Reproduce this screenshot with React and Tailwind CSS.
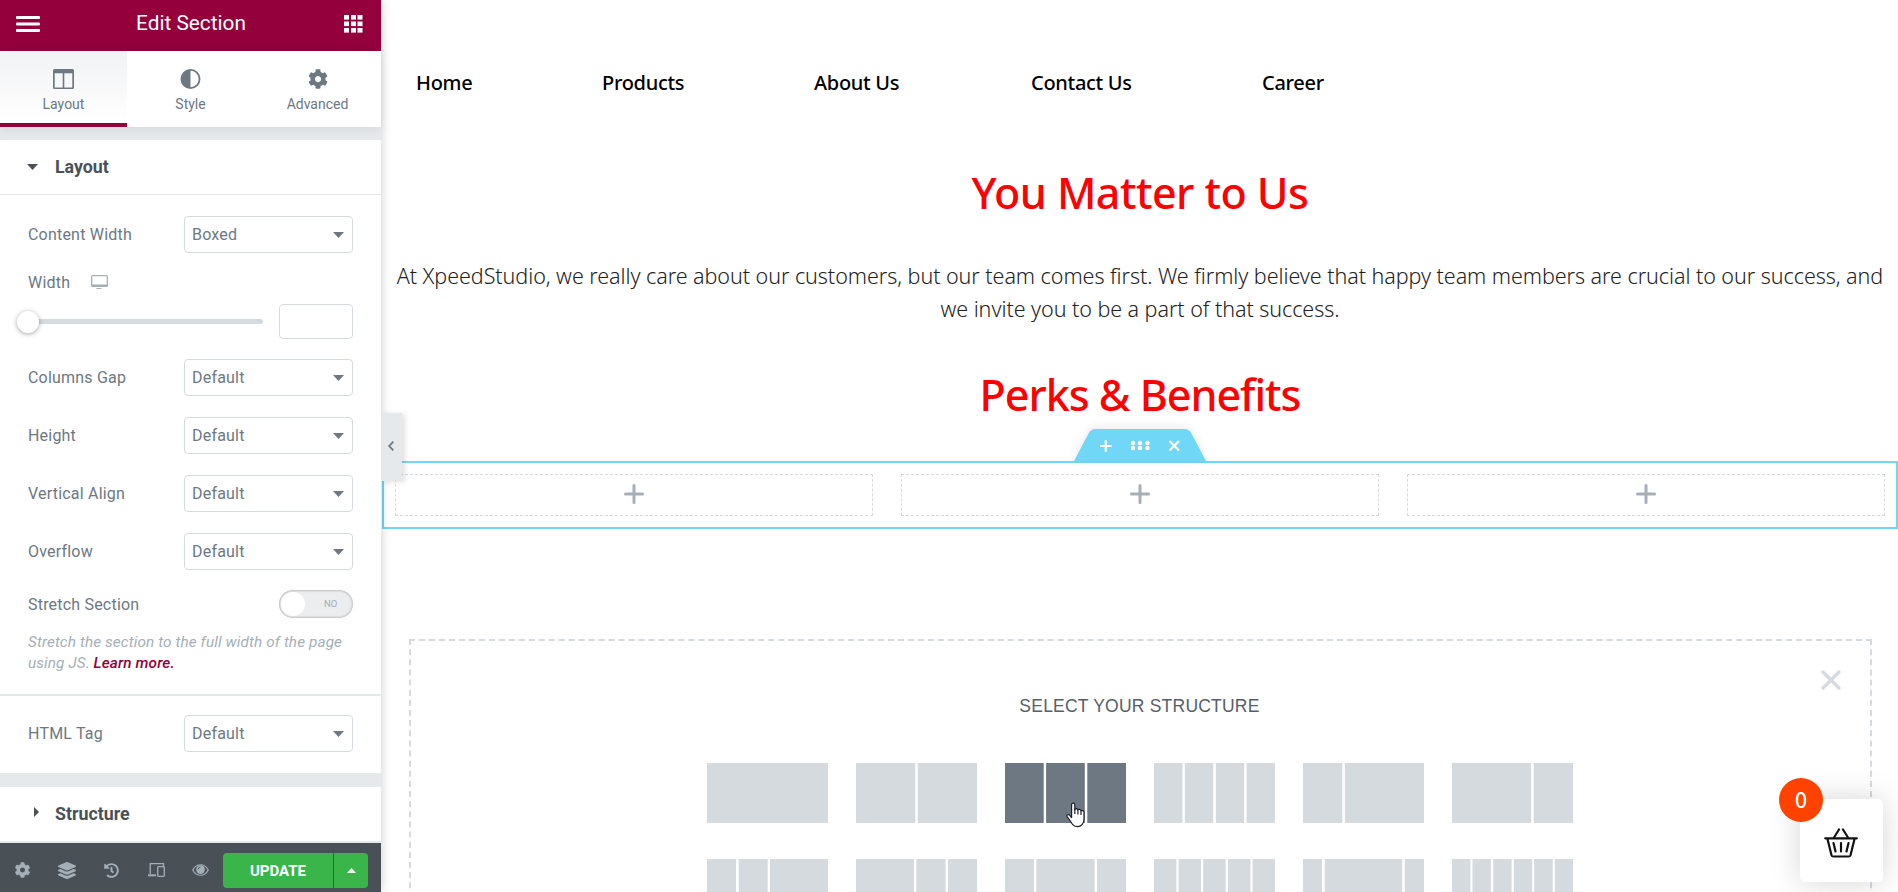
import { FaCog, FaHistory } from 'react-icons/fa'

const NAV_ITEMS = [
  { label: 'Home', width: 'w-[56px]' },
  { label: 'Products', width: 'w-[82px]' },
  { label: 'About Us', width: 'w-[87px]' },
  { label: 'Contact Us', width: 'w-[101px]' },
  { label: 'Career', width: 'w-[61px]' },
]

// [x, width] of every column block inside a 121px wide preset
const PRESETS = [
  [[0, 121]],
  [[0, 59.3], [61.7, 59.3]],
  [[0, 38.7], [41.1, 38.7], [82.3, 38.7]],
  [[0, 28.5], [30.8, 28.4], [61.8, 28.4], [92.6, 28.4]],
  [[0, 39.3], [41.9, 79.1]],
  [[0, 79.1], [81.7, 39.3]],
  [[0, 29], [31.7, 29], [63, 58]],
  [[0, 58], [60.3, 29.3], [92, 29]],
  [[0, 29], [31.3, 58.4], [92, 29]],
  [[0, 22.4], [24.6, 22.4], [49.2, 22.5], [74, 22.4], [98.6, 22.4]],
  [[0, 19], [21.7, 77.5], [101.7, 19.3]],
  [[0, 18.4], [20.5, 18.4], [41.2, 18.4], [61.8, 18.4], [82.2, 18.5], [102.8, 18.2]],
]

export default function App() {
  return (
    <div className="h-[892px] w-[1898px] flex overflow-hidden bg-white font-['Roboto',sans-serif]">
      <Sidebar />
      <Canvas />
    </div>
  )
}

function Sidebar() {
  return (
    <aside className="relative z-20 w-[381px] h-full flex-shrink-0 flex flex-col bg-white text-[#6d7882] shadow-[0_0_10px_rgba(0,0,0,0.2)]">
      <header className="h-[51px] flex-shrink-0 bg-[#93003c] text-white flex items-center justify-between pl-4 pr-[18px] pb-[3px]">
        <svg className="w-6 h-4" viewBox="0 0 24 16" fill="currentColor">
          <rect width="24" height="3" rx="1" />
          <rect y="6.5" width="24" height="3" rx="1" />
          <rect y="13" width="24" height="3" rx="1" />
        </svg>
        <h1 className="text-[20.8px] leading-6 pr-[2px] pb-[2px]">Edit Section</h1>
        <svg className="w-[19px] h-[18px]" viewBox="0 0 19 18" fill="currentColor">
          {[0, 6.5, 13].map((y) =>
            [0, 7, 13.5].map((x) => <rect key={`${x}-${y}`} x={x} y={y} width="5" height="4.6" />)
          )}
        </svg>
      </header>

      <div className="relative z-10 h-[76px] flex-shrink-0 grid grid-cols-3 bg-white shadow-[0_2px_10px_rgba(0,0,0,0.08)]">
        <Tab label="Layout" active>
          <svg className="w-[21px] h-5" viewBox="0 0 21 20" fill="currentColor">
            <path fillRule="evenodd" d="M1.5 0h18A1.5 1.5 0 0 1 21 1.500v17a1.500 1.500 0 0 1-1.500 1.500h-18A1.500 1.500 0 0 1 0 18.500v-17A1.500 1.500 0 0 1 1.500 0zM1.700 4.200v14.200h8V4.200zM11.300 4.200v14.200h8V4.200z" />
          </svg>
        </Tab>
        <Tab label="Style">
          <svg className="w-[21px] h-5" viewBox="0 0 21 20">
            <circle cx="10.5" cy="10" r="9.100" fill="none" stroke="currentColor" strokeWidth="1.8" />
            <path d="M10.500 1a9 9 0 0 0 0 18z" fill="currentColor" />
          </svg>
        </Tab>
        <Tab label="Advanced">
          <FaCog className="w-5 h-5" />
        </Tab>
      </div>

      <div className="h-[13px] flex-shrink-0 bg-[#e6e9ec]" />

      <div className="h-[55px] flex-shrink-0 border-b border-[#e6e9ec] flex items-center pl-[27px] text-[#495157]">
        <Caret />
        <h2 className="ml-[17px] mt-[1px] text-[17.8px] font-bold">Layout</h2>
      </div>

      <div className="flex flex-col px-7 pt-[21px] text-base tracking-[0.2px]">
        <SelectRow label="Content Width" value="Boxed" />
        <div className="mt-[17px] h-6 flex items-center">
          <span className="pt-[1px]">Width</span>
          <svg className="ml-[21px] w-[17px] h-[15px]" viewBox="0 0 17 15" fill="#a4afb7">
            <path fillRule="evenodd" d="M1.500 0h14A1.500 1.500 0 0 1 17 1.500v9a1.500 1.500 0 0 1-1.500 1.500h-14A1.500 1.500 0 0 1 0 10.500v-9A1.500 1.500 0 0 1 1.500 0zM1.300 1.300v8.200h14.400V1.300z" />
            <rect x="5.500" y="13" width="5" height="1" />
          </svg>
        </div>
        <div className="mt-[10px] flex items-center justify-between">
          <div className="-ml-[11px] flex items-center">
            <div className="z-10 w-[22px] h-[22px] rounded-full bg-white shadow-[0_1px_5px_rgba(0,0,0,0.35)]" />
            <div className="-ml-1 w-[228px] h-[5px] rounded-full bg-[#d5dadf]" />
          </div>
          <div className="w-[74px] h-[35px] rounded-[4px] border border-[#d5dadf]" />
        </div>
        <div className="mt-5 flex flex-col gap-[21px]">
          <SelectRow label="Columns Gap" value="Default" />
          <SelectRow label="Height" value="Default" />
          <SelectRow label="Vertical Align" value="Default" />
          <SelectRow label="Overflow" value="Default" />
        </div>
        <div className="mt-5 h-7 flex items-center justify-between">
          <span className="pt-[1px]">Stretch Section</span>
          <div className="w-[74px] h-7 rounded-full bg-[#ebedef] p-[2px] flex items-center shadow-[inset_0_0_2px_1px_rgba(0,0,0,0.2)]">
            <div className="w-6 h-6 rounded-full bg-white" />
            <span className="ml-[19px] text-[9.5px] tracking-normal text-[#a4afb7]">NO</span>
          </div>
        </div>
        <p className="mt-[14px] h-[62px] text-[15.3px] leading-[21px] tracking-[0.12px] italic text-[#a4afb7] whitespace-nowrap">
          Stretch the section to the full width of the page<br />
          using JS. <a className="font-medium text-[#93003c]">Learn more.</a>
        </p>
      </div>

      <div className="border-t-2 border-[#e6e9ec] h-[79px] flex-shrink-0 px-7 pt-[19px] text-base tracking-[0.2px]">
        <SelectRow label="HTML Tag" value="Default" />
      </div>

      <div className="h-[14px] flex-shrink-0 bg-[#e6e9ec]" />

      <div className="h-14 flex-shrink-0 border-b-2 border-[#e6e9ec] flex items-center pl-[34px] text-[#495157]">
        <svg className="w-[5px] h-[10px] mb-1" viewBox="0 0 5 10" fill="currentColor">
          <path d="M0 0l5 5-5 5z" />
        </svg>
        <h2 className="ml-4 text-[17.8px] font-bold">Structure</h2>
      </div>

      <Footer />

      {/* collapse handle sits over the canvas edge */}
      <button className="absolute left-full top-[413px] w-[21px] h-[68px] bg-[#e6e9ec] flex items-center justify-center shadow-[3px_1px_5px_rgba(0,0,0,0.12)]">
        <svg className="w-[6px] h-[10px] mr-[2px] mb-[2px]" viewBox="0 0 6 10" fill="none" stroke="#6d7882" strokeWidth="1.800">
          <path d="M5.300.7L1.200 5l4.100 4.300" />
        </svg>
      </button>
    </aside>
  )
}

function Tab({ label, active, children }) {
  return (
    <div
      className={`flex flex-col items-center pt-[18px] ${
        active ? 'border-b-4 border-[#93003c] bg-linear-to-b from-[#f1f2f4] to-white' : ''
      }`}
    >
      {children}
      <span className="mt-[5px] text-sm leading-5 text-[#6d7882]">{label}</span>
    </div>
  )
}

function Caret() {
  return (
    <svg className="w-[11px] h-[6px]" viewBox="0 0 11 6" fill="currentColor">
      <path d="M0 0h11L5.500 6z" />
    </svg>
  )
}

function SelectRow({ label, value }) {
  return (
    <div className="h-[37px] flex items-center justify-between">
      <span>{label}</span>
      <div className="w-[169px] h-[37px] rounded-[4px] border border-[#d5dadf] pl-[7px] pr-2 flex items-center justify-between">
        <span>{value}</span>
        <Caret />
      </div>
    </div>
  )
}

function Footer() {
  return (
    <footer className="h-[49px] flex-shrink-0 bg-[#495157] text-[#a4afb7] flex items-start pl-[14px] pt-[10px]">
      <div className="h-[34px] w-[209px] flex items-center">
        <FaCog className="w-[17px] h-4" />
        <svg className="ml-[27px] w-[18px] h-[17px]" viewBox="0 0 512 512" preserveAspectRatio="none" fill="currentColor">
          <path d="M12.400 148l232 105.300c6.900 3.100 16.300 3.100 23.200 0l232-105.300c16.600-7.500 16.600-32.500 0-40L267.600 2.700c-6.900-3.100-16.300-3.100-23.200 0L12.400 108c-16.600 7.500-16.600 32.500 0 40z" />
          <path d="M499.600 236.300l-57.900-26.200-161 73c-15.400 7-33.900 7-49.300 0l-161-73-57.900 26.200c-16.600 7.500-16.600 32.400 0 39.900l232 105.200c6.800 3.100 16.300 3.100 23.100 0l232-105.200c16.600-7.500 16.600-32.400 0-39.900z" />
          <path d="M499.600 364.100l-57.700-26.100-161.200 73c-15.400 7-33.900 7-49.300 0L70.200 338l-57.700 26.100c-16.600 7.500-16.600 32.400 0 39.900l232 105.200c6.800 3.100 16.300 3.100 23.100 0L499.600 404c16.600-7.500 16.600-32.400 0-39.900z" />
        </svg>
        <FaHistory className="ml-7 w-[15px] h-[15px]" />
        <svg className="ml-[29px] w-[17px] h-[14px]" viewBox="0 0 17 14" fill="none" stroke="currentColor" strokeWidth="1.300">
          <path d="M2.200 11V.700h13.300V3" />
          <path d="M0 12.300h8" strokeWidth="2" />
          <rect x="9.700" y="3.700" width="6.600" height="9.600" rx="0.800" />
        </svg>
        <svg className="ml-[27px] w-[17px] h-3" viewBox="0 0 17 12">
          <path d="M.700 6C4.500-1 12.500-1 16.300 6 12.500 13 4.500 13 .700 6z" fill="none" stroke="currentColor" strokeWidth="1.200" />
          <circle cx="8.500" cy="5.600" r="4.300" fill="currentColor" />
          <path d="M6.200 5.400a2.300 2.300 0 0 1 2.300-2.300" fill="none" stroke="#495157" strokeWidth="0.900" />
        </svg>
      </div>
      <div className="h-[35px] flex gap-[1px] text-white">
        <button className="w-[110px] rounded-l-[4px] bg-[#39b54a] pt-[1px] text-[15px] font-bold">UPDATE</button>
        <button className="w-[34px] rounded-r-[4px] bg-[#39b54a] flex items-center justify-center">
          <svg className="w-[9px] h-[5px]" viewBox="0 0 9 5" fill="currentColor">
            <path d="M0 5h9L4.500 0z" />
          </svg>
        </button>
      </div>
    </footer>
  )
}

function Canvas() {
  return (
    <main className="relative ml-px flex-1 h-full flex flex-col font-['Noto_Sans',sans-serif]">
      <nav className="mt-[68px] ml-[34px] h-[30px] flex-shrink-0 flex items-center gap-[130px] text-black text-xl font-medium tracking-[-0.3px] whitespace-nowrap">
        {NAV_ITEMS.map((item) => (
          <a key={item.label} className={item.width}>{item.label}</a>
        ))}
      </nav>

      <Heading className="mt-[68px] tracking-[-0.5px]">You Matter to Us</Heading>

      <p className="mt-[39px] flex-shrink-0 text-center text-[21.5px] leading-[33px] font-[350] tracking-[-0.05px] text-[#222] whitespace-nowrap">
        At XpeedStudio, we really care about our customers, but our team comes first. We firmly believe that happy team members are crucial to our success, and<br />
        we invite you to be a part of that success.
      </p>

      <Heading className="mt-[43px] tracking-[-1px]">Perks &amp; Benefits</Heading>

      <SectionHandle />

      <section className="h-[68px] flex-shrink-0 flex justify-between p-[13px] outline-2 -outline-offset-2 outline-[#71d7f7]">
        {[0, 1, 2].map((i) => (
          <div key={i} className="w-[478px] h-[42px] border border-dashed border-[#d5dadf] flex items-center justify-center">
            <svg className="w-5 h-5 mb-[2px]" viewBox="0 0 20 20" stroke="#a4afb7" strokeWidth="3" strokeLinecap="round">
              <path d="M10 1.500v17M1.500 10h17" />
            </svg>
          </div>
        ))}
      </section>

      <div className="relative mt-[110px] ml-[27px] mr-[26px] h-[300px] flex-shrink-0 border-2 border-dashed border-[#d5dadf] flex flex-col items-center pr-[2px]">
        <svg className="absolute right-[29px] top-[29px] w-5 h-5" viewBox="0 0 20 20" stroke="#d5dadf" strokeWidth="3.200" strokeLinecap="round">
          <path d="M2 2l16 16M18 2L2 18" />
        </svg>
        <div className="mt-[53px] h-6 leading-6 text-[17.5px] tracking-[0.22px] text-[#556068] font-['Liberation_Sans',Arial,sans-serif]">SELECT YOUR STRUCTURE</div>
        <div className="mt-[45px] grid grid-cols-[repeat(6,121px)] gap-x-7 gap-y-9">
          {PRESETS.map((blocks, i) => (
            <Preset key={i} blocks={blocks} active={i === 2} />
          ))}
        </div>
      </div>

      <Cursor />
      <CartButton />
    </main>
  )
}

function Heading({ className, children }) {
  return (
    <h2 className={`${className} h-[54px] flex-shrink-0 text-center text-[43px] leading-[54px] font-medium text-[#ff0000]`}>
      {children}
    </h2>
  )
}

function SectionHandle() {
  return (
    <div className="mt-[7px] h-8 flex-shrink-0 flex justify-center">
      <svg className="w-[132px] h-8 drop-shadow-[0_-2px_5px_rgba(0,0,0,0.08)]" viewBox="0 0 132 32">
        <path d="M0 32L14.500 4.500Q17 0 21 0H111Q115 0 117.500 4.500L132 32z" fill="#71d7f7" />
        <path d="M26 17h11.500M31.750 11.200v11.600" stroke="#fff" strokeWidth="2.200" />
        {[59, 66, 73.5].map((x) =>
          [14, 19].map((y) => <circle key={`${x}-${y}`} cx={x} cy={y} r="2.2" fill="#fff" />)
        )}
        <path d="M95.500 12l9.500 9.500M105 12l-9.500 9.500" stroke="#fff" strokeWidth="2.200" />
      </svg>
    </div>
  )
}

function Preset({ blocks, active }) {
  return (
    <svg className={`w-[121px] h-[60px] ${active ? 'text-[#6d7882]' : 'text-[#d5dadf]'}`} viewBox="0 0 121 60" fill="currentColor">
      {blocks.map(([x, width]) => (
        <rect key={x} x={x} width={width} height="60" />
      ))}
    </svg>
  )
}

function Cursor() {
  return (
    <svg className="absolute left-[684px] top-[802px] w-5 h-[26px]" viewBox="0 0 20 26" fill="#fff" stroke="#1b1f2e" strokeWidth="1.200" strokeLinejoin="round">
      <path d="M5.600 2.500C5.600.600 8.800.600 8.800 2.500V7.500C9.300 6.200 11.600 6.500 11.800 7.800 12.700 6.900 14.700 7.300 14.900 8.700 16 8 18 8.600 18 10.300V17C18 21 15.500 24.600 11.500 24.600 7.500 24.600 6 22 4 18.500L1 14.300C.200 12.800 2.300 12 3.500 13.200L5.600 15.500z" />
      <path d="M8.800 7v5M11.900 8v4.500M15 9v4" fill="none" />
    </svg>
  )
}

function CartButton() {
  return (
    <div className="absolute left-[1418px] top-[799px] w-[83px] h-[83px] rounded-[5px] bg-white shadow-[0_0_30px_rgba(0,0,0,0.17)] flex items-center justify-center">
      <svg className="w-[34px] h-[30px] mt-1 mr-[2px]" viewBox="0 0 34 30" fill="none" stroke="#111" strokeWidth="2.200" strokeLinecap="round" strokeLinejoin="round">
        <path d="M1.200 10.300h31.600M3.500 11l4 16.200q.4 1.300 2 1.300h15q1.600 0 2-1.300l4-16.200M10 9.500l5-8M24 9.500l-5-8M9.500 15l2 8.500M17 15v8.500M24.500 15l-2 8.500" />
      </svg>
      <span className="absolute -left-[21px] -top-[21px] w-11 h-11 pt-[2px] rounded-full bg-[#ff4200] text-white text-[21px] font-medium flex items-center justify-center">0</span>
    </div>
  )
}
